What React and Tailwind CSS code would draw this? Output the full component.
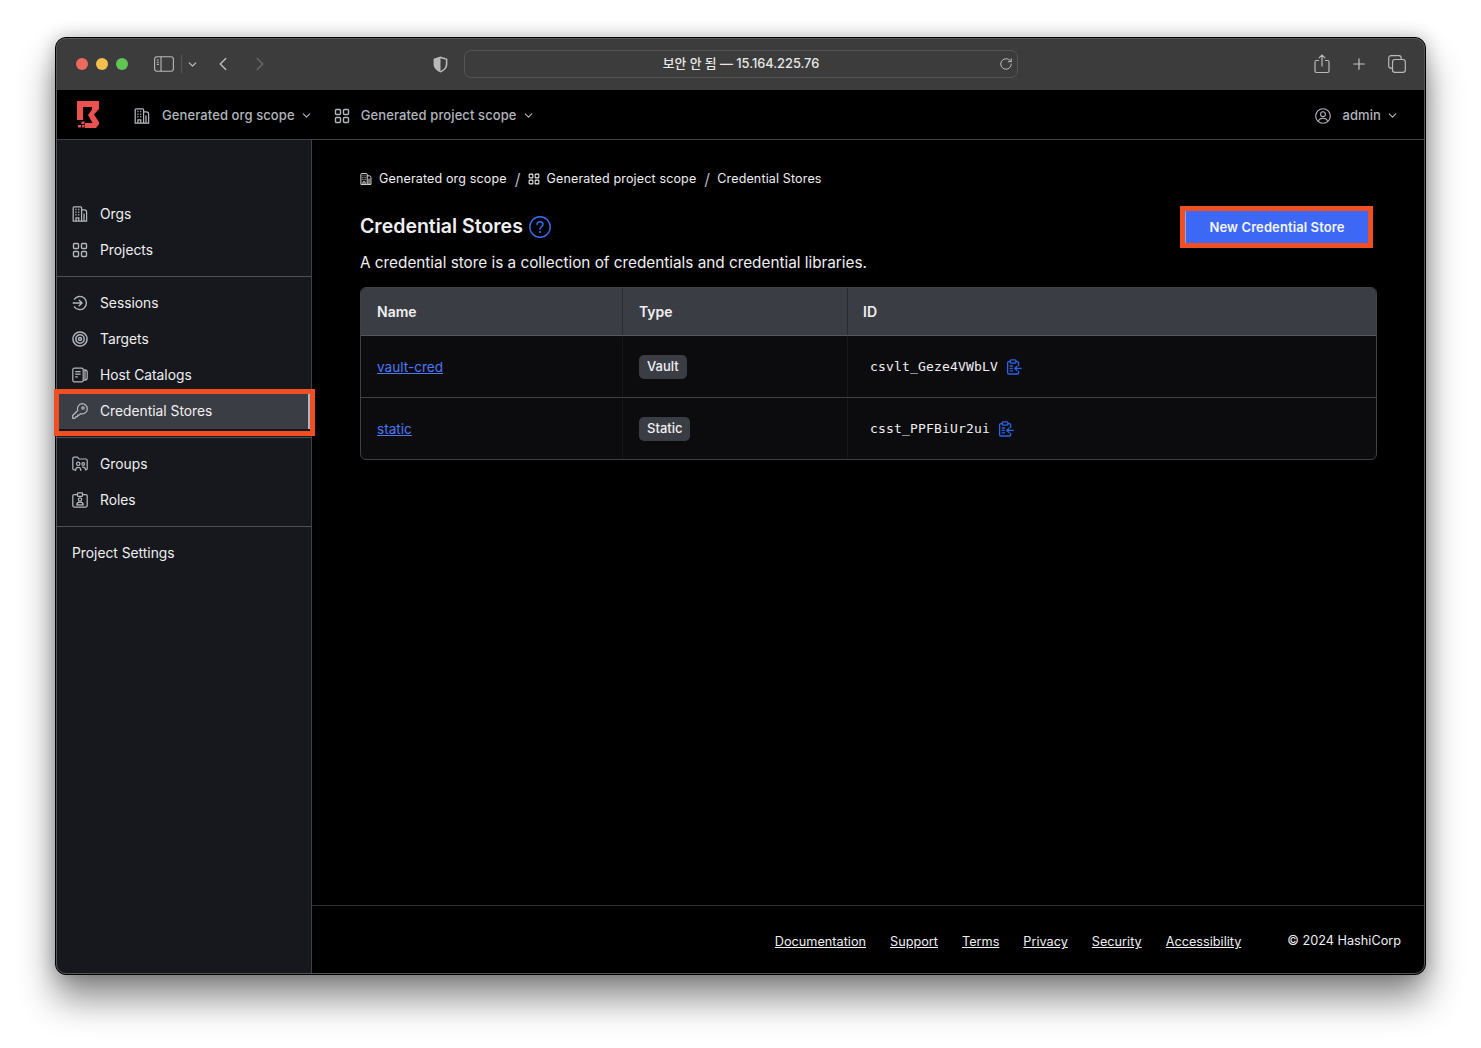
import { ChevronDown, ChevronLeft, ChevronRight, Plus, RotateCw } from 'lucide-react';

const OrgIcon = ({ className }) => (
  <svg viewBox="0 0 16 16" fill="none" stroke="currentColor" strokeWidth="1.25" className={className}>
    <path d="M1.2 15.2V1.8c0-.6.4-1 1-1h6.4c.6 0 1 .4 1 1v13.4H1.2z" />
    <path d="M9.6 3.8h2.8c1.3 0 2.2.9 2.2 2.2v9.2H9.6" />
    <path strokeWidth="1.5" d="M3.4 3.6h1.1M6.2 3.6h1.1M3.4 6.2h1.1M6.2 6.2h1.1M3.4 8.8h1.1M6.2 8.8h1.1" />
    <path d="M4 15v-3.2h2.8V15M12 7.5V15" />
  </svg>
);

const GridIcon = ({ className }) => (
  <svg viewBox="0 0 16 16" fill="none" stroke="currentColor" strokeWidth="1.4" className={className}>
    <rect x="1.5" y="1.5" width="5" height="5" rx="1" />
    <rect x="9.5" y="1.5" width="5" height="5" rx="1" />
    <rect x="1.5" y="9.5" width="5" height="5" rx="1" />
    <rect x="9.5" y="9.5" width="5" height="5" rx="1" />
  </svg>
);

const SessionIcon = ({ className }) => (
  <svg viewBox="0 0 16 16" fill="none" stroke="currentColor" strokeWidth="1.4" strokeLinecap="round" strokeLinejoin="round" className={className}>
    <path d="M2.4 4.2A6.6 6.6 0 1 1 2.4 11.8" />
    <path d="M1.2 8h8.6M7.2 5.2 10 8l-2.8 2.8" />
  </svg>
);

const TargetIcon = ({ className }) => (
  <svg viewBox="0 0 16 16" fill="none" stroke="currentColor" strokeWidth="1.5" className={className}>
    <circle cx="8" cy="8" r="7.1" />
    <circle cx="8" cy="8" r="4.2" />
    <circle cx="8" cy="8" r="1.5" />
  </svg>
);

const CatalogIcon = ({ className }) => (
  <svg viewBox="0 0 16 16" fill="none" stroke="currentColor" strokeWidth="1.2" className={className}>
    <rect x="0.8" y="1.2" width="10.4" height="13.6" rx="1.6" />
    <path d="M11.2 2.8h1.6c1.4 0 2.4 1 2.4 2.4v5.6c0 1.4-1 2.4-2.4 2.4h-1.6M13 3v10" />
    <path d="M3.2 4.6h5.4M3.2 7.2h5.4M3.2 9.8h2.6" />
  </svg>
);

const KeyIcon = ({ className }) => (
  <svg viewBox="0 0 16 16" fill="none" stroke="currentColor" strokeWidth="1.25" strokeLinejoin="round" className={className}>
    <path d="M10.2 0.7a5.1 5.1 0 0 1 0 10.2c-.6 0-1.1-.1-1.6-.3L7.2 12H5.6v1.6H4l-1.2 1.7H.7v-2.8l5-5A5.1 5.1 0 0 1 10.2.7z" />
    <circle cx="11" cy="5" r="1.2" />
  </svg>
);

const GroupIcon = ({ className }) => (
  <svg viewBox="0 0 16 16" fill="none" stroke="currentColor" strokeWidth="1.2" strokeLinecap="round" className={className}>
    <path d="M2.6 13.8h-.4c-.8 0-1.4-.6-1.4-1.4V2.6c0-.8.6-1.4 1.4-1.4h3.2L7 3h6.8c.8 0 1.4.6 1.4 1.4v8c0 .8-.4 1.2-1 1.4" />
    <circle cx="6.2" cy="7.8" r="1.7" />
    <path d="M3.6 14.4c0-1.9 1.1-3 2.6-3s2.6 1.1 2.6 3" />
    <circle cx="11.2" cy="8" r="1.4" />
    <path d="M10.6 11.2c1.7-.2 2.8.8 3 2.6" />
  </svg>
);

const RoleIcon = ({ className }) => (
  <svg viewBox="0 0 16 16" fill="none" stroke="currentColor" strokeWidth="1.25" className={className}>
    <path d="M5.4 2.6H2.2C1.4 2.6.8 3.2.8 4v9.6c0 .8.6 1.4 1.4 1.4h11.6c.8 0 1.4-.6 1.4-1.4V4c0-.8-.6-1.4-1.4-1.4h-3.2" />
    <rect x="5.4" y="0.9" width="5.2" height="3.4" rx="0.8" />
    <circle cx="8" cy="7.6" r="1.7" />
    <path d="M4.8 12.8c0-1.7 1.4-2.6 3.2-2.6s3.2.9 3.2 2.6z" />
  </svg>
);

const ClipboardIcon = () => (
  <svg viewBox="0 0 16 16" fill="none" stroke="#2f62e5" strokeWidth="1.35" strokeLinecap="round" strokeLinejoin="round" className="w-4 h-4 ml-[8px]">
    <path d="M4 2.6H2.8c-.7 0-1.2.5-1.2 1.2v10c0 .7.5 1.2 1.2 1.2h8.6c.7 0 1.2-.5 1.2-1.2v-1.4M12.6 6.4V3.8c0-.7-.5-1.2-1.2-1.2H10.2" />
    <rect x="4.2" y="0.9" width="5.8" height="3.2" rx="1" />
    <path d="M15.2 9.4H9M11 7.2 8.8 9.4l2.2 2.2M4.2 7h2.4M4.2 9.4h2M4.2 11.8h2.4" />
  </svg>
);

const Logo = () => (
  <svg viewBox="0 0 22 27" className="w-[22px] h-[27px]" fill="#e9524f">
    <path d="M0 0H22V8L17 13.5 22 21V23L19 27H8V22H15.5L11 14 15 8.5V6H6V19H0Z" />
    <rect x="4.5" y="20.5" width="3" height="2.5" />
    <rect x="1" y="24" width="3" height="2.5" />
    <rect x="5" y="24" width="2.5" height="2.5" />
  </svg>
);

const SideItem = ({ icon: Icon, label }) => (
  <div className="flex items-center h-9 pl-4 text-[13.8px] text-[#efeff1]">
    {Icon && <Icon className="w-4 h-4 mr-[12px] text-[#b2b6bd]" />}
    <span>{label}</span>
  </div>
);

const Divider = () => <div className="h-px bg-[#4f5157]" />;

const rows = [
  { name: 'vault-cred', type: 'Vault', id: 'csvlt_Geze4VWbLV' },
  { name: 'static', type: 'Static', id: 'csst_PPFBiUr2ui' },
];

const footerLinks = ['Documentation', 'Support', 'Terms', 'Privacy', 'Security', 'Accessibility'];

export default function App() {
  return (
    <div className="w-[1481px] h-[1048px] overflow-hidden bg-white pt-[37px] pl-[55px]" style={{ fontFamily: 'Inter, sans-serif' }}>
      <div className="relative w-[1371px] h-[938px] flex flex-col rounded-[11px] border border-black bg-black shadow-[0_24px_36px_rgba(0,0,0,0.45),0_0_18px_rgba(0,0,0,0.25)]">
        {/* Browser toolbar */}
        <div className="h-[52px] shrink-0 flex items-center rounded-t-[10px] bg-[#3c3c3c] text-[#b9b9b9]">
          <div className="flex items-center gap-2 ml-[20px]">
            <span className="w-3 h-3 rounded-full bg-[#ec6a5e]" />
            <span className="w-3 h-3 rounded-full bg-[#f4bf4f]" />
            <span className="w-3 h-3 rounded-full bg-[#61c554]" />
          </div>
          <svg viewBox="0 0 20 16" fill="none" stroke="currentColor" strokeWidth="1.1" className="w-5 h-4 ml-[26px]">
            <rect x="0.6" y="0.8" width="18.8" height="14.4" rx="2.4" />
            <path d="M7 0.8v14.4M2.8 4h2M2.8 6.2h2M2.8 8.4h2" />
          </svg>
          <div className="w-px h-[18px] bg-[#555] ml-[7px]" />
          <ChevronDown className="w-[13px] h-[13px] ml-[4px]" strokeWidth={2.5} />
          <ChevronLeft className="w-[22px] h-[22px] ml-[13px]" strokeWidth={1.6} />
          <ChevronRight className="w-[22px] h-[22px] ml-[15px] text-[#6a6a6a]" strokeWidth={1.6} />
          <svg viewBox="0 0 14 16" className="w-[15px] h-[17px] ml-[162px]">
            <path d="M7 0.5 13.5 2.6v5c0 3.8-2.6 6.4-6.5 7.9C3.1 14 .5 11.4.5 7.6v-5z" fill="#b9b9b9" />
            <path d="M7 2 12 3.6v4c0 3-2 5.2-5 6.5z" fill="#3c3c3c" />
          </svg>
          <div className="w-[554px] h-[28px] ml-[16px] flex items-center justify-center rounded-[7px] border border-[#555] relative text-[12.8px] font-medium text-[#e8e8e8]">
            <span style={{ fontFamily: 'Inter, "Noto Sans CJK KR", sans-serif' }}>보안 안 됨 — 15.164.225.76</span>
            <RotateCw className="absolute right-[4px] top-[6px] w-[14px] h-[14px] text-[#c4c4c4]" strokeWidth={1.6} />
          </div>
          <svg viewBox="0 0 16 20" fill="none" stroke="currentColor" strokeWidth="1.2" className="w-4 h-5 ml-[296px]">
            <path d="M5 6.5H2.4c-.8 0-1.4.6-1.4 1.4v9.2c0 .8.6 1.4 1.4 1.4h11.2c.8 0 1.4-.6 1.4-1.4V7.9c0-.8-.6-1.4-1.4-1.4H11M8 12.5V1.2M4.8 4.2 8 1l3.2 3.2" />
          </svg>
          <Plus className="w-[18px] h-[18px] ml-[20px] text-[#c4c4c4]" strokeWidth={1.6} />
          <svg viewBox="0 0 18 18" fill="none" stroke="currentColor" strokeWidth="1.2" className="w-[18px] h-[18px] ml-[20px]">
            <rect x="4.5" y="4.5" width="12.8" height="12.8" rx="2.4" />
            <path d="M4.5 13.2H3c-1.3 0-2.3-1-2.3-2.3V3C.7 1.7 1.7.7 3 .7h7.9c1.3 0 2.3 1 2.3 2.3v1.5" />
          </svg>
        </div>

        {/* App header */}
        <div className="h-[50px] shrink-0 flex items-center pt-[2px] bg-black border-b border-[#3f4046] text-[13px] font-medium text-[#b2b6bd]">
          <div className="ml-[21px] -mt-[2px]"><Logo /></div>
          <OrgIcon className="w-4 h-4 ml-[35px]" />
          <span className="ml-[12px] tracking-[0.1px]">Generated org scope</span>
          <ChevronDown className="w-[13px] h-[13px] ml-[5px]" strokeWidth={2} />
          <GridIcon className="w-4 h-4 ml-[21px]" />
          <span className="ml-[11px] tracking-[0.1px]">Generated project scope</span>
          <ChevronDown className="w-[13px] h-[13px] ml-[5px]" strokeWidth={2} />
          <svg viewBox="0 0 16 16" fill="none" stroke="currentColor" strokeWidth="1.1" className="w-4 h-4 ml-auto">
            <circle cx="8" cy="8" r="7.3" />
            <circle cx="8" cy="6.2" r="2.4" />
            <path d="M3.4 13.2c.6-2 2.4-3 4.6-3s4 1 4.6 3" />
          </svg>
          <span className="ml-[11px] tracking-[0.1px]">admin</span>
          <ChevronDown className="w-[13px] h-[13px] ml-[5px] mr-[26px]" strokeWidth={2} />
        </div>

        <div className="flex-1 flex min-h-0">
          {/* Sidebar */}
          <div className="w-[256px] shrink-0 bg-[#17181d] border-r border-[#3f4046] rounded-bl-[10px] flex flex-col">
            <div className="pt-[56px] pb-2">
              <SideItem icon={OrgIcon} label="Orgs" />
              <SideItem icon={GridIcon} label="Projects" />
            </div>
            <Divider />
            <div className="py-2">
              <SideItem icon={SessionIcon} label="Sessions" />
              <SideItem icon={TargetIcon} label="Targets" />
              <SideItem icon={CatalogIcon} label="Host Catalogs" />
              <div className="relative">
                <div className="flex items-center h-9 pl-4 text-[13.8px] text-[#efeff1] bg-[#3b3d45] border-r-[2px] border-[#b2b6bd] mr-[1px]">
                  <KeyIcon className="w-4 h-4 mr-[12px] text-[#b2b6bd]" />
                  <span>Credential Stores</span>
                </div>
                <div className="absolute z-10 left-[-2px] top-[-4px] w-[261px] h-[47px] border-[5px] border-[#f04e23]" />
              </div>
            </div>
            <Divider />
            <div className="py-2">
              <SideItem icon={GroupIcon} label="Groups" />
              <SideItem icon={RoleIcon} label="Roles" />
            </div>
            <Divider />
            <div className="py-2">
              <div className="flex items-center h-9 pl-4 text-[13.8px] text-[#efeff1]">Project Settings</div>
            </div>
          </div>

          {/* Main */}
          <div className="flex-1 min-w-0 flex flex-col bg-black rounded-br-[10px]">
            <div className="flex-1 px-12 pt-[30px]">
              <div className="flex items-center h-[18px] text-[12.5px] text-[#efeff1] tracking-[0.15px]">
                <OrgIcon className="w-[12px] h-[12px] mr-[7px]" />
                <span>Generated org scope</span>
                <span className="ml-[8px] mr-[7px] text-base text-[#b2b6bd]">/</span>
                <GridIcon className="w-[12px] h-[12px] mr-[7px]" />
                <span>Generated project scope</span>
                <span className="ml-[8px] mr-[7px] text-base text-[#b2b6bd]">/</span>
                <span>Credential Stores</span>
              </div>
              <div className="flex items-start justify-between mt-[20px] pr-[4px]">
                <div className="flex items-center h-9 pt-[2px]">
                  <h1 className="text-[19.5px] font-semibold text-[#efeff1]">Credential Stores</h1>
                  <svg viewBox="0 0 22 22" fill="none" stroke="#3b6ef0" strokeWidth="1.4" strokeLinecap="round" className="w-[22px] h-[22px] ml-[6px]">
                    <circle cx="11" cy="11" r="10.2" />
                    <path d="M8 8.6c0-1.7 1.3-2.8 3-2.8s3 1.1 3 2.6c0 2.3-3 2.4-3 4.8" />
                    <circle cx="11" cy="16" r="0.4" fill="#3b6ef0" />
                  </svg>
                </div>
                <div className="w-[193px] h-[42px] -mt-[2px] border-[5px] border-[#f04e23]">
                  <div className="h-full flex items-center justify-center pt-[2px] border-l border-[#8ba3f8] bg-[#3d68f5] text-[13px] font-semibold text-[#f4f6ff] tracking-[0.1px]">
                    New Credential Store
                  </div>
                </div>
              </div>
              <p className="mt-[3px] text-[15.3px] leading-6 text-[#efeff1]">
                A credential store is a collection of credentials and credential libraries.
              </p>

              <div className="mt-[12px] rounded-md border border-[#3f4046] overflow-hidden bg-[#0c0c0f]">
                <div className="flex h-[48px] bg-[#3b3d45] text-sm font-semibold text-[#efeff1] border-b border-[#55575e]">
                  <div className="w-[262px] flex items-center pl-4 border-r border-[#2a2b30]">Name</div>
                  <div className="w-[225px] flex items-center pl-4 border-r border-[#2a2b30]">Type</div>
                  <div className="flex-1 flex items-center pl-[15px]">ID</div>
                </div>
                {rows.map((row, index) => (
                  <div key={row.id} className={`flex pt-[1px] ${index === 0 ? 'h-[62px] border-b border-[#3f4046]' : 'h-[61px]'}`}>
                    <div className="w-[262px] flex items-center pl-4 border-r border-[#17181d]">
                      <a href="#" className="text-[13.6px] underline text-[#4c78f5]">{row.name}</a>
                    </div>
                    <div className="w-[225px] flex items-center pl-4 border-r border-[#17181d]">
                      <span className="h-6 px-2 flex items-center rounded-[5px] bg-[#3b3d45] text-[13px] font-medium text-[#efeff1]">{row.type}</span>
                    </div>
                    <div className="flex-1 flex items-center pl-[22px]">
                      <span className="text-[13px] tracking-[0.17px] text-[#efeff1]" style={{ fontFamily: '"DejaVu Sans Mono", monospace' }}>{row.id}</span>
                      <ClipboardIcon />
                    </div>
                  </div>
                ))}
              </div>
            </div>

            {/* Footer */}
            <div className="h-[69px] shrink-0 flex items-center justify-end pt-[2px] border-t border-[#2f3036] pr-[24px] text-[12.7px] text-[#efeff1]">
              <div className="flex gap-6 mt-[2px]">
                {footerLinks.map((link) => (
                  <a key={link} href="#" className="underline">{link}</a>
                ))}
              </div>
              <span className="ml-[46px]">© 2024 HashiCorp</span>
            </div>
          </div>
        </div>
        {/* Lighter rim of the window, drawn over its content */}
        <div className="absolute inset-0 rounded-[10px] border border-[#55565a] pointer-events-none" />
      </div>
    </div>
  );
}
